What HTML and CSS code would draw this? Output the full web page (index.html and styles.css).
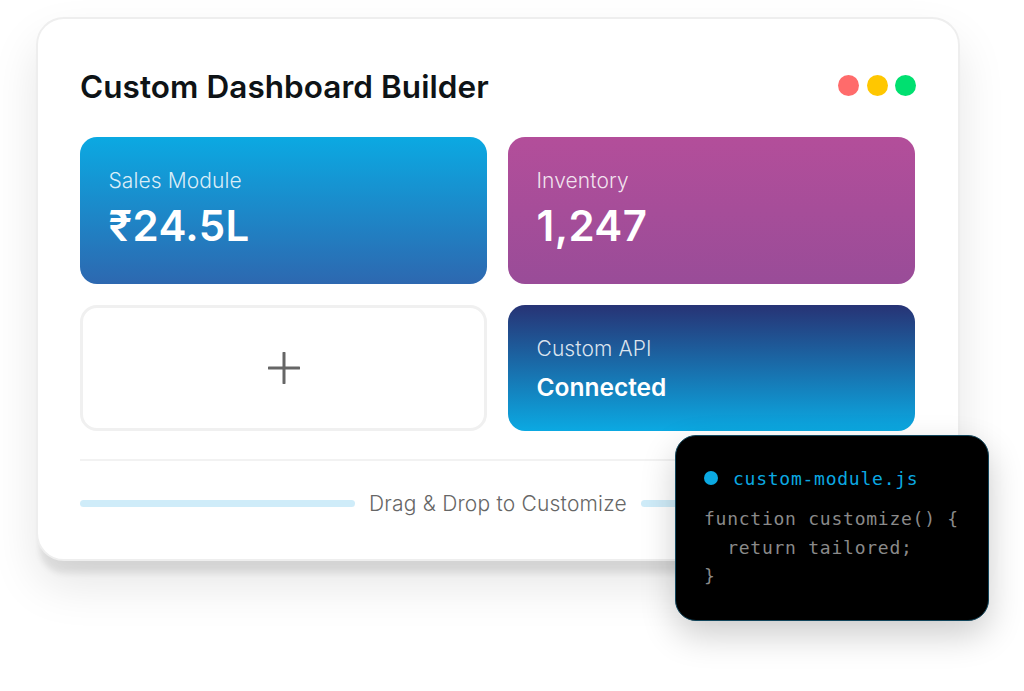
FILE: index.html
```html
<!DOCTYPE html>
<html>

<head>
    <title>Custom Dashboard Builder</title>
    <link rel="stylesheet" href="styles.css">
</head>

<body>
    <div class="stage">
        <div class="builder">
            <div class="builder-head">
                <h1>Custom Dashboard Builder</h1>
                <div class="dots">
                    <span class="dot dot-red"></span>
                    <span class="dot dot-yellow"></span>
                    <span class="dot dot-green"></span>
                </div>
            </div>

            <div class="modules">
                <div class="module module-sales">
                    <div class="module-label">Sales Module</div>
                    <div class="module-value">₹24.5L</div>
                </div>
                <div class="module module-inventory">
                    <div class="module-label">Inventory</div>
                    <div class="module-value">1,247</div>
                </div>
                <div class="module module-add">
                    <svg class="plus" width="32" height="32" viewBox="0 0 32 32">
                        <path d="M16 1v30M1 16h30" fill="none" stroke="#666" stroke-width="3" stroke-linecap="round" />
                    </svg>
                </div>
                <div class="module module-api">
                    <div class="module-label">Custom API</div>
                    <div class="module-status">Connected</div>
                </div>
            </div>

            <div class="builder-foot">
                <span class="foot-bar foot-bar-left"></span>
                <span class="foot-text">Drag &amp; Drop to Customize</span>
                <span class="foot-bar"></span>
            </div>
        </div>

        <div class="code-card">
            <div class="code-head">
                <span class="code-dot"></span>
                <span class="code-file">custom-module.js</span>
            </div>
            <pre class="code-body">function customize() {
  return tailored;
}</pre>
        </div>
    </div>
</body>

</html>
```

FILE: styles.css
```css
* {
    margin: 0;
    padding: 0;
    box-sizing: border-box;
}

body {
    font-family: Inter, "Liberation Sans", sans-serif;
    font-optical-sizing: none;
    background: white;
    height: 691px;
    overflow: hidden;
}

.stage {
    position: relative;
    height: 691px;
    padding: 17px 64px 0 36px;
}

.builder {
    height: 544px;
    padding: 42px 42px 0;
    background: white;
    border: 2px solid #eeeeee;
    border-radius: 28px;
    box-shadow: 0 24px 48px rgba(0, 0, 0, 0.1), 0 16px 6px -4px rgba(0, 0, 0, 0.09);
}

.builder-head {
    display: flex;
    align-items: center;
    justify-content: space-between;
    height: 50px;
    margin-bottom: 26px;
}

h1 {
    font-size: 31.5px;
    font-weight: 600;
    letter-spacing: 0.05px;
    color: #0e1316;
}

.dots {
    display: flex;
    gap: 7.5px;
    margin-bottom: 2px;
}

.dot {
    width: 21px;
    height: 21px;
    border-radius: 50%;
}

.dot-red {
    background: #ff6b6b;
}

.dot-yellow {
    background: #ffc700;
}

.dot-green {
    background: #00e070;
}

.modules {
    display: grid;
    grid-template-columns: 407px 407px;
    grid-template-rows: 147px 126px;
    gap: 21px;
}

.module {
    border-radius: 17px;
    padding: 28px 28.5px;
    color: white;
}

.module-sales {
    background: linear-gradient(180deg, #0ba9e2, #2d68b0);
}

.module-inventory {
    background: linear-gradient(180deg, #b34e9a, #994c98);
}

.module-api {
    background: linear-gradient(180deg, #273375, #0ba9e2);
}

.module-add {
    display: flex;
    align-items: center;
    justify-content: center;
    background: white;
    border: 3px solid #f0f0f0;
}

.module-label {
    font-size: 21px;
    font-weight: 300;
    line-height: 31px;
    letter-spacing: 0.1px;
    color: rgba(255, 255, 255, 0.85);
}

.module-value {
    font-size: 42px;
    font-weight: 600;
    line-height: 50px;
    letter-spacing: 0.4px;
    margin-top: 5px;
}

.module-status {
    font-size: 24.5px;
    font-weight: 600;
    line-height: 34px;
    margin-top: 6px;
}

.builder-foot {
    display: flex;
    align-items: center;
    gap: 14px;
    margin-top: 28px;
    padding-top: 28px;
    border-top: 2px solid #f2f2f2;
}

.foot-bar {
    flex: 1;
    height: 7px;
    border-radius: 4px;
    background: #cfecf9;
    margin-bottom: 1px;
}

.foot-bar-left {
    flex: 0 0 275px;
}

.foot-text {
    font-size: 21px;
    font-weight: 300;
    line-height: 30px;
    letter-spacing: 0.2px;
    color: #666;
}

.code-card {
    position: absolute;
    left: 675px;
    top: 435px;
    width: 314px;
    height: 186px;
    padding: 28px;
    background: black;
    border: 1px solid #12465c;
    border-radius: 21px;
    box-shadow: 0 14px 35px rgba(0, 0, 0, 0.2);
    font-family: "DejaVu Sans Mono", "Liberation Mono", monospace;
    font-size: 18px;
    letter-spacing: 0.75px;
}

.code-head {
    display: flex;
    align-items: center;
    gap: 15px;
    height: 28px;
    margin-bottom: 13px;
}

.code-dot {
    width: 14px;
    height: 14px;
    border-radius: 50%;
    background: #0ba9e2;
}

.code-file {
    color: #0ba9e2;
}

.code-body {
    font: inherit;
    line-height: 28.5px;
    color: #8a8a8a;
}
```
